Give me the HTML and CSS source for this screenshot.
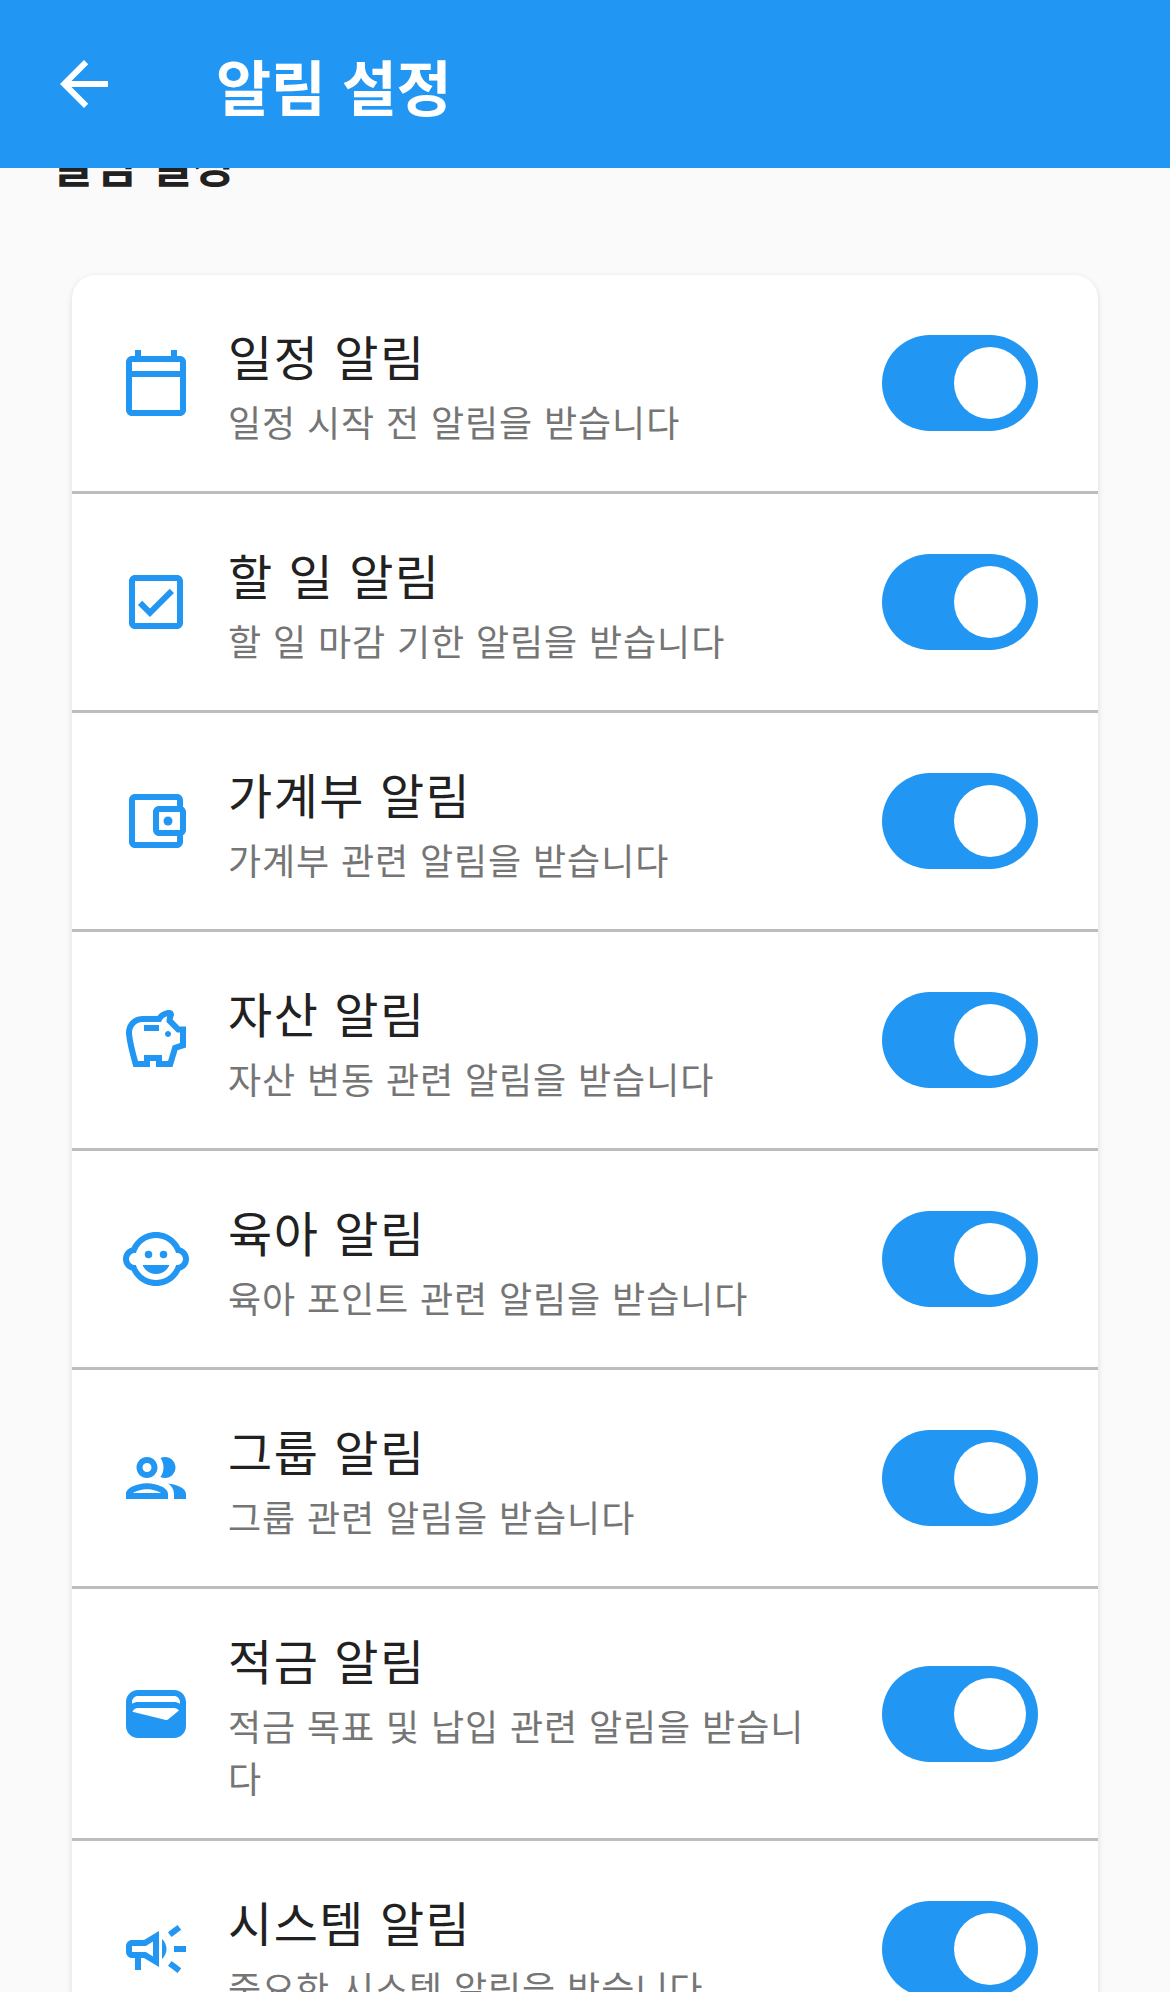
FILE: index.html
```html
<!DOCTYPE html>
<html lang="ko">
<head>
    <meta charset="UTF-8">
    <meta name="viewport" content="width=device-width, initial-scale=1.0">
    <title>알림 설정</title>
    <link rel="stylesheet" href="styles.css">
</head>
<body>

<header class="app-bar">
    <svg class="back-icon" viewBox="0 0 24 24"><path d="M20 11H7.83l5.59-5.59L12 4l-8 8 8 8 1.41-1.41L7.83 13H20v-2z"/></svg>
    <h1>알림 설정</h1>
</header>

<main class="content">
    <h2 class="section-title">알림 설정</h2>

    <div class="card">
        <div class="row">
            <svg class="row-icon" viewBox="0 0 24 24"><path d="M20 3h-1V1h-2v2H7V1H5v2H4c-1.1 0-2 .9-2 2v16c0 1.1.9 2 2 2h16c1.1 0 2-.9 2-2V5c0-1.1-.9-2-2-2zm0 2v3H4V5h16zM4 21V10h16v11H4z"/></svg>
            <div class="row-text">
                <div class="row-title">일정 알림</div>
                <div class="row-sub">일정 시작 전 알림을 받습니다</div>
            </div>
            <div class="toggle"><span class="knob"></span></div>
        </div>
        <div class="row">
            <svg class="row-icon" viewBox="0 0 24 24"><path d="M19 3H5c-1.1 0-2 .9-2 2v14c0 1.1.9 2 2 2h14c1.1 0 2-.9 2-2V5c0-1.1-.9-2-2-2zm0 16H5V5h14v14zM17.99 9l-1.41-1.42-6.59 6.59-2.58-2.57-1.42 1.41 4 3.99z"/></svg>
            <div class="row-text">
                <div class="row-title">할 일 알림</div>
                <div class="row-sub">할 일 마감 기한 알림을 받습니다</div>
            </div>
            <div class="toggle"><span class="knob"></span></div>
        </div>
        <div class="row">
            <svg class="row-icon" viewBox="0 0 24 24"><path d="M21 7.28V5c0-1.1-.9-2-2-2H5c-1.11 0-2 .9-2 2v14c0 1.1.89 2 2 2h14c1.1 0 2-.9 2-2v-2.28c.59-.35 1-.98 1-1.72V9c0-.74-.41-1.37-1-1.72zM20 9v6h-7V9h7zM5 19V5h14v2h-6c-1.1 0-2 .9-2 2v6c0 1.1.9 2 2 2h6v2H5z"/><circle cx="16" cy="12" r="1.5"/></svg>
            <div class="row-text">
                <div class="row-title">가계부 알림</div>
                <div class="row-sub">가계부 관련 알림을 받습니다</div>
            </div>
            <div class="toggle"><span class="knob"></span></div>
        </div>
        <div class="row">
            <svg class="row-icon" viewBox="0 0 24 24"><path d="M15 10c0-.55.45-1 1-1s1 .45 1 1-.45 1-1 1-1-.45-1-1zM8 9h5V7H8v2zm14-1.5v6.97l-2.82.94L17.5 21H12v-2h-2v2H4.5S2 12.54 2 9.5 4.46 4 7.5 4h5c.91-1.21 2.36-2 4-2 .83 0 1.5.67 1.5 1.5 0 .21-.04.4-.12.58-.14.32-.26.68-.32 1.07l2.27 2.35H22zm-2 2h-1L15.5 6c0-.65.09-1.29.26-1.91-.97.25-1.76.97-2.09 1.91H7.5C5.57 6 4 7.57 4 9.5c0 1.88 1.22 6.65 2.01 9.5H8v-2h6v2h2.01l1.55-5.15 2.44-.82V9.5z"/></svg>
            <div class="row-text">
                <div class="row-title">자산 알림</div>
                <div class="row-sub">자산 변동 관련 알림을 받습니다</div>
            </div>
            <div class="toggle"><span class="knob"></span></div>
        </div>
        <div class="row">
            <svg class="row-icon" viewBox="0 0 24 24"><circle cx="14.5" cy="10.5" r="1.25"/><circle cx="9.5" cy="10.5" r="1.25"/><path d="M22.94 12.66c.04-.21.06-.43.06-.66s-.02-.45-.06-.66c-.25-1.51-1.36-2.74-2.81-3.17-.53-1.12-1.28-2.1-2.19-2.91C16.36 3.85 14.28 3 12 3s-4.36.85-5.94 2.26c-.92.81-1.67 1.8-2.19 2.91-1.45.43-2.56 1.65-2.81 3.17-.04.21-.06.43-.06.66s.02.45.06.66c.25 1.51 1.36 2.74 2.81 3.17.52 1.11 1.27 2.09 2.17 2.89C7.62 20.14 9.71 21 12 21s4.38-.86 5.97-2.28c.9-.8 1.65-1.79 2.17-2.89 1.44-.43 2.55-1.65 2.8-3.17zM19 14c-.1 0-.19-.02-.29-.03-.2.67-.49 1.29-.86 1.86C16.6 17.74 14.45 19 12 19s-4.6-1.26-5.85-3.17c-.37-.57-.66-1.19-.86-1.86-.1.01-.19.03-.29.03-1.1 0-2-.9-2-2s.9-2 2-2c.1 0 .19.02.29.03.2-.67.49-1.29.86-1.86C7.4 6.26 9.55 5 12 5s4.6 1.26 5.85 3.17c.37.57.66 1.19.86 1.86.1-.01.19-.03.29-.03 1.1 0 2 .9 2 2s-.9 2-2 2zM7.5 14c.76 1.77 2.49 3 4.5 3s3.74-1.23 4.5-3h-9z"/></svg>
            <div class="row-text">
                <div class="row-title">육아 알림</div>
                <div class="row-sub">육아 포인트 관련 알림을 받습니다</div>
            </div>
            <div class="toggle"><span class="knob"></span></div>
        </div>
        <div class="row">
            <svg class="row-icon" viewBox="0 0 24 24"><path d="M9 13.75c-2.34 0-7 1.17-7 3.5V19h14v-1.75c0-2.33-4.66-3.5-7-3.5zM4.34 17c.84-.58 2.87-1.25 4.66-1.25s3.82.67 4.66 1.25H4.34zM9 12c1.93 0 3.5-1.57 3.5-3.5S10.93 5 9 5 5.5 6.57 5.5 8.5 7.07 12 9 12zm0-5c.83 0 1.5.67 1.5 1.5S9.83 10 9 10s-1.5-.67-1.5-1.5S8.17 7 9 7zm7.04 6.81c1.16.84 1.96 1.96 1.96 3.44V19h4v-1.75c0-2.02-3.5-3.17-5.96-3.44zM15 12c1.93 0 3.5-1.57 3.5-3.5S16.93 5 15 5c-.54 0-1.04.13-1.5.35.63.89 1 1.98 1 3.15s-.37 2.26-1 3.15c.46.22.96.35 1.5.35z"/></svg>
            <div class="row-text">
                <div class="row-title">그룹 알림</div>
                <div class="row-sub">그룹 관련 알림을 받습니다</div>
            </div>
            <div class="toggle"><span class="knob"></span></div>
        </div>
        <div class="row">
            <svg class="row-icon" viewBox="0 0 24 24"><path d="M18 4H6C3.79 4 2 5.79 2 8v8c0 2.21 1.79 4 4 4h12c2.21 0 4-1.79 4-4V8c0-2.21-1.79-4-4-4zm-1.86 9.77c-.24.2-.57.28-.88.2L4.15 11.25C4.45 10.52 5.16 10 6 10h12c.67 0 1.26.34 1.63.84l-3.49 2.93zM6 6h12c1.1 0 2 .9 2 2v.55C19.41 8.21 18.73 8 18 8H6c-.73 0-1.41.21-2 .55V8c0-1.1.9-2 2-2z"/></svg>
            <div class="row-text">
                <div class="row-title">적금 알림</div>
                <div class="row-sub">적금 목표 및 납입 관련 알림을 받습니다</div>
            </div>
            <div class="toggle"><span class="knob"></span></div>
        </div>
        <div class="row">
            <svg class="row-icon" viewBox="0 0 24 24"><path d="M18 11v2h4v-2h-4zm-2 6.61c.96.71 2.21 1.65 3.2 2.39.4-.53.8-1.07 1.2-1.6-.99-.74-2.24-1.68-3.2-2.4-.4.54-.8 1.08-1.2 1.61zM20.4 5.6c-.4-.53-.8-1.07-1.2-1.6-.99.74-2.24 1.68-3.2 2.4.4.53.8 1.07 1.2 1.6.96-.72 2.21-1.65 3.2-2.4zM4 9c-1.1 0-2 .9-2 2v2c0 1.1.9 2 2 2h1v4h2v-4h1l5 3V6L8 9H4zm5.03 1.71L11 9.53v4.94l-1.97-1.18-.48-.29H4v-2h4.55l.48-.29zM15.5 12c0-1.33-.58-2.53-1.5-3.35v6.69c.92-.81 1.5-2.01 1.5-3.34z"/></svg>
            <div class="row-text">
                <div class="row-title">시스템 알림</div>
                <div class="row-sub">중요한 시스템 알림을 받습니다</div>
            </div>
            <div class="toggle"><span class="knob"></span></div>
        </div>
    </div>
</main>

</body>
</html>
```

FILE: styles.css
```css
html, body {
    height: 100%;
    overflow: hidden;
}
body {
    font-family: "Noto Sans CJK KR", "Noto Sans", sans-serif;
    background-color: #fafafa;
    margin: 0;
    color: #212121;
    position: relative;
}
.app-bar {
    position: absolute;
    top: 0;
    left: 0;
    right: 0;
    height: 168px;
    background-color: #2196f3;
    display: flex;
    align-items: center;
    padding-left: 48px;
    color: #fff;
}
.back-icon {
    width: 72px;
    height: 72px;
    fill: #fff;
}
.app-bar h1 {
    margin: 0 0 0 96px;
    font-size: 60px;
    font-weight: 700;
    letter-spacing: -0.5px;
}
.content {
    padding-top: 132px;
}
.section-title {
    margin: 0 0 82px 52px;
    font-size: 46px;
    line-height: 61px;
    font-weight: 700;
}
.card {
    margin: 0 72px;
    background: #fff;
    border-radius: 24px;
    box-shadow: 0 2px 6px rgba(0, 0, 0, 0.12);
}
.row {
    display: flex;
    align-items: center;
    min-height: 146px;
    padding: 35px 48px;
    border-bottom: 3px solid #bdbdbd;
}
.row:last-child {
    border-bottom: none;
}
.row-icon {
    width: 72px;
    height: 72px;
    fill: #2196f3;
    flex-shrink: 0;
}
.row-text {
    flex: 1;
    margin: 0 48px 0 36px;
    word-break: break-all;
}
.row-title {
    font-size: 48px;
    line-height: 70px;
    letter-spacing: 1.5px;
}
.row-sub {
    margin-top: 5px;
    font-size: 36px;
    line-height: 52px;
    letter-spacing: 0.9px;
    color: #757575;
}
.toggle {
    width: 156px;
    height: 96px;
    margin: 0 12px;
    border-radius: 48px;
    background-color: #2196f3;
    display: flex;
    align-items: center;
    justify-content: flex-end;
    padding-right: 12px;
    box-sizing: border-box;
    flex-shrink: 0;
}
.knob {
    width: 72px;
    height: 72px;
    border-radius: 50%;
    background-color: #fff;
}
```
